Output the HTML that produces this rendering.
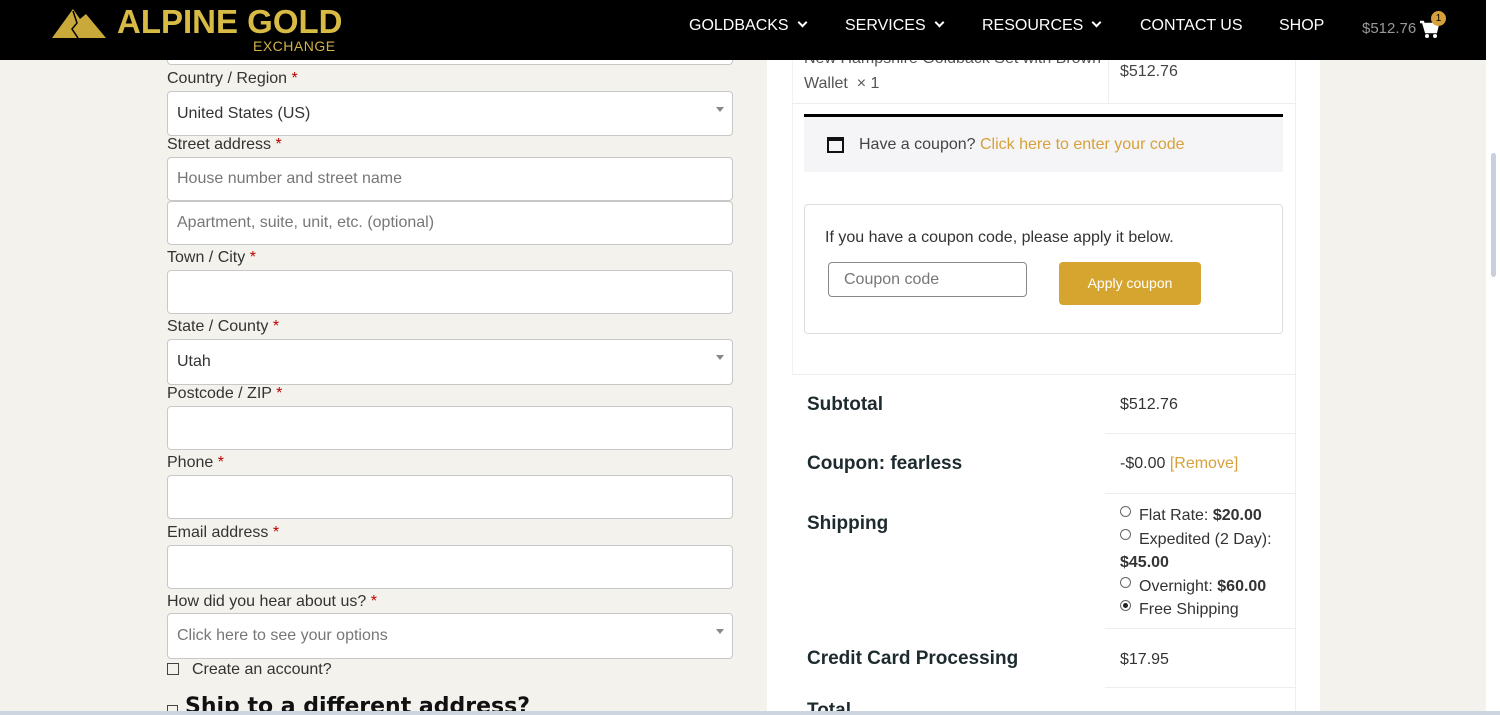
<!DOCTYPE html>
<html style="width:1500px;height:715px;overflow:hidden"><head><meta charset="utf-8"><style>
*{box-sizing:border-box;margin:0;padding:0}
body{width:1500px;height:715px;overflow:hidden;background:#f4f2ec;font-family:"Liberation Sans",Arial,sans-serif;position:relative;color:#333}
.a{position:absolute}
.hdr{left:0;top:0;width:1486px;height:60px;background:#000;z-index:5}
.z{z-index:6}
.nav{color:#fff;font-size:16px;top:17px;z-index:6}
.chev{display:inline-block;width:7px;height:7px;border-right:2px solid #fff;border-bottom:2px solid #fff;transform:rotate(45deg);margin-left:10px;position:relative;top:-4px}
.lbl{font-size:16px;color:#333;left:167px}
.lbl b{color:#b00;font-weight:normal}
.fld{left:167px;width:566px;background:#fff;border:1px solid #c8c8c8;border-radius:4px;font-size:16px;padding-left:9px;display:flex;align-items:center;color:#333}
.ph{color:#777}
.dd::after{content:"";position:absolute;right:8px;top:15px;border-left:4px solid transparent;border-right:4px solid transparent;border-top:5px solid #888}
.panel{left:767px;top:60px;width:553px;height:655px;background:#fff}
.t{font-size:16px;color:#333}
.bold{font-weight:bold;font-size:19px;color:#1e2b2e}
.hl{background:#eee;height:1px}
.gold{color:#d6a13a}
.rad{display:inline-block;width:11px;height:11px;border:1px solid #666;border-radius:50%;position:absolute;left:1120px}
</style></head><body>
<div class="a hdr"></div>
<svg class="a z" style="left:52px;top:7px" width="56" height="32" viewBox="0 0 56 32"><polygon points="0,31 21,2 28,12 34,7 54,31" fill="#c9a93a"/><path d="M21,4 L25,16 L20,22 L26,31" stroke="#000" stroke-width="1.5" fill="none"/></svg>
<div class="a z" style="left:117px;top:3px;font-size:33px;font-weight:bold;color:#d8bb45">ALPINE GOLD</div>
<div class="a z" style="left:253px;top:38px;font-size:14px;line-height:16px;color:#d0b24a;letter-spacing:0.5px">EXCHANGE</div>
<div class="a nav" style="left:689px">GOLDBACKS<span class="chev"></span></div>
<div class="a nav" style="left:845px">SERVICES<span class="chev"></span></div>
<div class="a nav" style="left:982px">RESOURCES<span class="chev"></span></div>
<div class="a nav" style="left:1140px">CONTACT US</div>
<div class="a nav" style="left:1279px">SHOP</div>
<div class="a z" style="left:1362px;top:20px;font-size:15px;color:#999">$512.76</div>
<svg class="a z" style="left:1419px;top:19px" width="20" height="20" viewBox="0 0 20 20"><path d="M1,3 H4 L7,13 H17 L19,5 H5" stroke="#fff" stroke-width="2.4" fill="#fff"/><circle cx="8" cy="17" r="2" fill="#fff"/><circle cx="16" cy="17" r="2" fill="#fff"/></svg>
<div class="a z" style="left:1431px;top:11px;width:15px;height:15px;border-radius:50%;background:#d6a13a;color:#000;font-size:10px;text-align:center;line-height:15px">1</div>
<div class="a z" style="left:1486px;top:0;width:14px;height:715px;background:#fff"></div>
<div class="a z" style="left:1491px;top:153px;width:5px;height:124px;background:#c8d0dc;border-radius:3px"></div>
<div class="a z" style="left:0;top:711px;width:1500px;height:4px;background:#cdd5e0"></div>

<div class="a fld" style="top:20px;height:45px"></div>
<div class="a lbl" style="top:70px">Country / Region <b>*</b></div>
<div class="a fld dd" style="top:91px;height:45px">United States (US)</div>
<div class="a lbl" style="top:136px">Street address <b>*</b></div>
<div class="a fld" style="top:157px;height:44px"><span class="ph">House number and street name</span></div>
<div class="a fld" style="top:201px;height:44px"><span class="ph">Apartment, suite, unit, etc. (optional)</span></div>
<div class="a lbl" style="top:249px">Town / City <b>*</b></div>
<div class="a fld" style="top:270px;height:44px"></div>
<div class="a lbl" style="top:318px">State / County <b>*</b></div>
<div class="a fld dd" style="top:339px;height:46px">Utah</div>
<div class="a lbl" style="top:385px">Postcode / ZIP <b>*</b></div>
<div class="a fld" style="top:406px;height:44px"></div>
<div class="a lbl" style="top:454px">Phone <b>*</b></div>
<div class="a fld" style="top:475px;height:44px"></div>
<div class="a lbl" style="top:524px">Email address <b>*</b></div>
<div class="a fld" style="top:545px;height:44px"></div>
<div class="a lbl" style="top:593px">How did you hear about us? <b>*</b></div>
<div class="a fld dd" style="top:613px;height:46px"><span class="ph">Click here to see your options</span></div>
<div class="a" style="left:167px;top:663px;width:12px;height:12px;border:1px solid #444"></div>
<div class="a lbl" style="left:192px;top:661px">Create an account?</div>
<div class="a" style="left:167px;top:705px;width:11px;height:11px;border:1px solid #444"></div>
<div class="a" style="left:185px;top:694px;font-size:22px;font-weight:bold;color:#111;font-family:'DejaVu Sans',sans-serif;line-height:26px">Ship to a different address?</div>

<div class="a panel"></div>
<div class="a" style="left:1295px;top:60px;width:1px;height:655px;background:#eee"></div>
<div class="a" style="left:792px;top:60px;width:1px;height:315px;background:#f2f2f2"></div>
<div class="a t" style="left:804px;top:50px;color:#555">New Hampshire Goldback Set with Brown</div>
<div class="a t" style="left:804px;top:75px;color:#555">Wallet &nbsp;× 1</div>
<div class="a" style="left:1108px;top:60px;width:1px;height:43px;background:#eee"></div>
<div class="a t" style="left:1120px;top:63px;color:#444">$512.76</div>
<div class="a hl" style="left:792px;top:103px;width:503px"></div>
<div class="a" style="left:804px;top:114px;width:479px;height:3px;background:#000"></div>
<div class="a" style="left:804px;top:117px;width:479px;height:55px;background:#f5f5f7"></div>
<div class="a" style="left:827px;top:137px;width:17px;height:16px;border:2px solid #111;border-top-width:4px"></div>
<div class="a t" style="left:859px;top:136px;color:#444">Have a coupon? <span class="gold">Click here to enter your code</span></div>
<div class="a" style="left:804px;top:204px;width:479px;height:130px;border:1px solid #ddd;border-radius:4px"></div>
<div class="a t" style="left:825px;top:229px;color:#333">If you have a coupon code, please apply it below.</div>
<div class="a" style="left:828px;top:262px;width:199px;height:35px;border:1px solid #888;border-radius:4px;font-size:16px;color:#777;padding:8px 0 0 15px">Coupon code</div>
<div class="a" style="left:1059px;top:262px;width:142px;height:43px;background:#d6a52f;border-radius:4px;color:#fff;font-size:14px;text-align:center;line-height:43px">Apply coupon</div>
<div class="a hl" style="left:792px;top:374px;width:503px"></div>
<div class="a bold" style="left:807px;top:394px">Subtotal</div>
<div class="a t" style="left:1120px;top:396px">$512.76</div>
<div class="a hl" style="left:1105px;top:433px;width:190px"></div>
<div class="a bold" style="left:807px;top:453px">Coupon: fearless</div>
<div class="a t" style="left:1120px;top:455px">-$0.00 <span class="gold">[Remove]</span></div>
<div class="a hl" style="left:1105px;top:493px;width:190px"></div>
<div class="a bold" style="left:807px;top:513px">Shipping</div>
<span class="rad" style="top:506px"></span>
<div class="a t" style="left:1139px;top:507px">Flat Rate: <b>$20.00</b></div>
<span class="rad" style="top:529px"></span>
<div class="a t" style="left:1139px;top:531px">Expedited (2 Day):</div>
<div class="a t" style="left:1120px;top:554px"><b>$45.00</b></div>
<span class="rad" style="top:577px"></span>
<div class="a t" style="left:1139px;top:578px">Overnight: <b>$60.00</b></div>
<span class="rad" style="top:600px"><span style="position:absolute;left:2px;top:2px;width:5px;height:5px;border-radius:50%;background:#222"></span></span>
<div class="a t" style="left:1139px;top:601px">Free Shipping</div>
<div class="a hl" style="left:1105px;top:628px;width:190px"></div>
<div class="a bold" style="left:807px;top:648px">Credit Card Processing</div>
<div class="a t" style="left:1120px;top:651px">$17.95</div>
<div class="a hl" style="left:1105px;top:687px;width:190px"></div>
<div class="a bold" style="left:807px;top:701px;line-height:20px">Total</div>
</body></html>
